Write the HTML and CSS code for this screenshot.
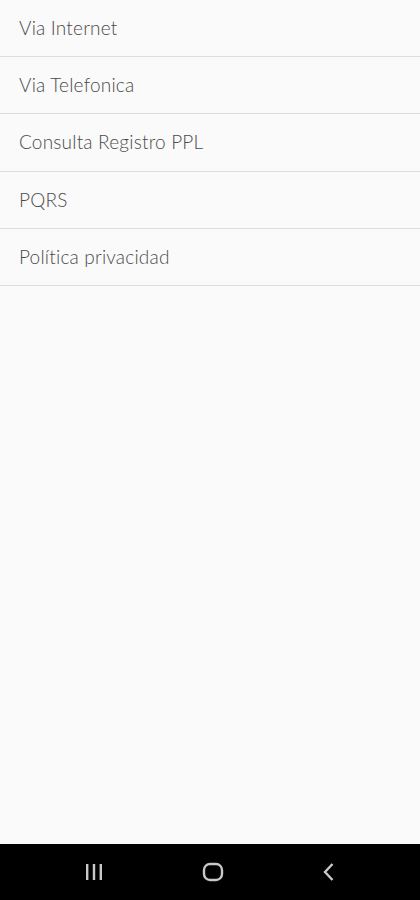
FILE: index.html
```html
<!DOCTYPE html>
<html>
<head>
    <title>Menu</title>
    <link rel="stylesheet" href="styles.css">
</head>
<body>
    <div class="screen">
        <ul class="menu">
            <li>Via Internet</li>
            <li>Via Telefonica</li>
            <li>Consulta Registro PPL</li>
            <li>PQRS</li>
            <li>Política privacidad</li>
        </ul>
    </div>
    <div class="navbar">
        <svg class="nav-icon" width="20" height="18" viewBox="0 0 20 18">
            <rect x="2" y="1" width="2.4" height="16" fill="#c8c8c8"/>
            <rect x="8.8" y="1" width="2.4" height="16" fill="#c8c8c8"/>
            <rect x="15.6" y="1" width="2.4" height="16" fill="#c8c8c8"/>
        </svg>
        <svg class="nav-icon" width="22" height="20" viewBox="0 0 22 20">
            <rect x="2" y="2" width="18" height="16" rx="6" fill="none" stroke="#c8c8c8" stroke-width="2.4"/>
        </svg>
        <svg class="nav-icon" width="16" height="20" viewBox="0 0 16 20">
            <path d="M11.5 2 L4 10 L11.5 18" fill="none" stroke="#c8c8c8" stroke-width="2.4"/>
        </svg>
    </div>
</body>
</html>
```

FILE: styles.css
```css
body {
    margin: 0;
    background-color: #fafafa;
    font-family: Lato, "Open Sans", sans-serif;
    height: 900px;
    display: flex;
    flex-direction: column;
}
.screen {
    flex: 1;
}
.menu {
    list-style: none;
    margin: 0;
    padding: 0;
}
.menu li {
    height: 56.2px;
    line-height: 56px;
    padding-left: 19px;
    border-bottom: 1px solid #dedede;
    font-size: 19px;
    font-weight: 300;
    letter-spacing: 0.2px;
    color: #4a4a4a;
}
.navbar {
    height: 56px;
    background-color: black;
    display: flex;
    justify-content: space-between;
    align-items: center;
    padding: 0 83px 0 84px;
}
```
